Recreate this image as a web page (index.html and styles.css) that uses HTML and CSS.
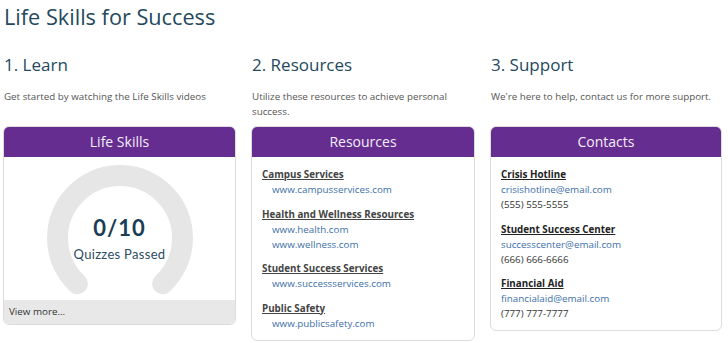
FILE: index.html
```html
<!DOCTYPE html>
<html>
<head>
<meta charset="utf-8">
<link rel="stylesheet" href="styles.css">
</head>
<body>
<h1 class="title">Life Skills for Success</h1>
<div class="grid">
  <h2 class="step">1. Learn</h2>
  <h2 class="step">2. Resources</h2>
  <h2 class="step">3. Support</h2>

  <p class="desc">Get started by watching the Life Skills videos</p>
  <p class="desc">Utilize these resources to achieve personal success.</p>
  <p class="desc">We're here to help, contact us for more support.</p>

  <div class="card card-learn">
    <div class="card-head">Life Skills</div>
    <div class="gauge">
      <svg class="gauge-arc" width="146" height="132" viewBox="0 0 146 132">
        <path d="M 30.4 118.7 A 62.5 62.5 0 1 1 115.6 118.7" fill="none" stroke="#e6e6e6" stroke-width="21" stroke-linecap="round"/>
      </svg>
      <div class="gauge-text">
        <div class="gauge-num">0/10</div>
        <div class="gauge-label">Quizzes Passed</div>
      </div>
    </div>
    <div class="card-foot">View more...</div>
  </div>

  <div class="card">
    <div class="card-head">Resources</div>
    <div class="card-body">
      <div class="group">
        <div class="res-title">Campus Services</div>
        <a class="res-link">www.campusservices.com</a>
      </div>
      <div class="group">
        <div class="res-title">Health and Wellness Resources</div>
        <a class="res-link">www.health.com</a>
        <a class="res-link">www.wellness.com</a>
      </div>
      <div class="group">
        <div class="res-title">Student Success Services</div>
        <a class="res-link">www.successservices.com</a>
      </div>
      <div class="group">
        <div class="res-title">Public Safety</div>
        <a class="res-link">www.publicsafety.com</a>
      </div>
    </div>
  </div>

  <div class="card">
    <div class="card-head">Contacts</div>
    <div class="card-body">
      <div class="group">
        <div class="con-title">Crisis Hotline</div>
        <a class="con-link">crisishotline@email.com</a>
        <div class="con-phone">(555) 555-5555</div>
      </div>
      <div class="group">
        <div class="con-title">Student Success Center</div>
        <a class="con-link">successcenter@email.com</a>
        <div class="con-phone">(666) 666-6666</div>
      </div>
      <div class="group">
        <div class="con-title">Financial Aid</div>
        <a class="con-link">financialaid@email.com</a>
        <div class="con-phone">(777) 777-7777</div>
      </div>
    </div>
  </div>
</div>
</body>
</html>
```

FILE: styles.css
```css
* { box-sizing: border-box; }
body {
  margin: 0;
  padding: 0 5px 0 3px;
  font-family: "Open Sans", "Liberation Sans", sans-serif;
  background: #fff;
  color: #333;
}
.title {
  margin: 0;
  padding: 1px 0 0 1px;
  font-size: 21.7px;
  font-weight: 400;
  line-height: 32px;
  color: #24495d;
}
.grid {
  display: grid;
  grid-template-columns: 233px 224px 232px;
  column-gap: 15px;
  margin-top: 19px;
}
.step {
  margin: 0;
  padding-left: 1px;
  font-size: 17px;
  font-weight: 400;
  line-height: 26px;
  color: #24495d;
}
.desc {
  margin: 11px 0 0 1px;
  font-size: 9.8px;
  line-height: 15px;
  color: #555;
}
.card {
  margin-top: 7px;
  align-self: start;
  border: 1px solid #dcdcdc;
  border-radius: 6px;
  overflow: hidden;
  background: #fff;
}
.card-head {
  background: #662d91;
  color: #f4eef8;
  text-align: center;
  font-size: 14px;
  line-height: 29px;
  height: 30px;
}
.gauge {
  position: relative;
  height: 143px;
  display: flex;
  justify-content: center;
  padding-top: 8px;
}
.gauge-text {
  position: absolute;
  left: 0;
  right: 0;
  top: 58px;
  text-align: center;
  font-family: "Lato", "Open Sans", sans-serif;
}
.gauge-num {
  font-size: 22px;
  font-weight: 700;
  color: #1b3d55;
  line-height: 26px;
  letter-spacing: 1px;
}
.gauge-label {
  margin-top: 4px;
  font-size: 13px;
  color: #2c4c62;
  line-height: 18px;
  letter-spacing: 0.3px;
}
.card-foot {
  background: #e8e8e8;
  height: 24px;
  line-height: 24px;
  padding-left: 5px;
  font-size: 9.8px;
  color: #333;
}
.card-body {
  padding: 10px 10px 9px 10px;
  font-size: 9.8px;
  line-height: 15px;
}
.group { margin-bottom: 9.5px; }
.group:last-child { margin-bottom: 0; }
.res-title, .con-title {
  font-weight: 700;
  text-decoration: underline;
}
.res-title { color: #444; }
.con-title { color: #222; }
.res-link {
  display: block;
  padding-left: 10px;
  color: #3d6fa8;
}
.con-link {
  display: block;
  color: #3d6fa8;
}
.con-phone { color: #333; }
```
